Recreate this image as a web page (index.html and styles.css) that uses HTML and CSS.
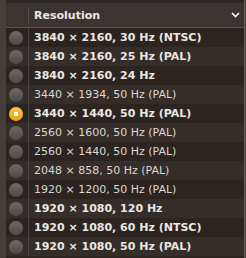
FILE: index.html
```html
<!DOCTYPE html>
<html lang="en">
	<head>
		<meta charset="UTF-8">
		<title>Resolution</title>
		<link rel="stylesheet" href="styles.css">
	</head>
	<body>
		<div class="panel">
			<div class="table">
				<div class="head">
					<div class="cell check"></div>
					<div class="cell title">Resolution
						<svg class="chevron" width="9" height="6" viewBox="0 0 9 6"><path d="M1 1 L4.5 4.5 L8 1" fill="none" stroke="#ffffff" stroke-width="1.6"/></svg>
					</div>
				</div>
				<ul class="rows">
					<li class="bold"><span class="radio"></span><span class="label">3840 × 2160, 30 Hz (NTSC)</span></li>
					<li class="bold"><span class="radio"></span><span class="label">3840 × 2160, 25 Hz (PAL)</span></li>
					<li class="bold"><span class="radio"></span><span class="label">3840 × 2160, 24 Hz</span></li>
					<li><span class="radio"></span><span class="label">3440 × 1934, 50 Hz (PAL)</span></li>
					<li class="bold"><span class="radio on"></span><span class="label">3440 × 1440, 50 Hz (PAL)</span></li>
					<li><span class="radio"></span><span class="label">2560 × 1600, 50 Hz (PAL)</span></li>
					<li><span class="radio"></span><span class="label">2560 × 1440, 50 Hz (PAL)</span></li>
					<li><span class="radio"></span><span class="label">2048 × 858, 50 Hz (PAL)</span></li>
					<li><span class="radio"></span><span class="label">1920 × 1200, 50 Hz (PAL)</span></li>
					<li class="bold"><span class="radio"></span><span class="label">1920 × 1080, 120 Hz</span></li>
					<li class="bold"><span class="radio"></span><span class="label">1920 × 1080, 60 Hz (NTSC)</span></li>
					<li class="bold"><span class="radio"></span><span class="label">1920 × 1080, 50 Hz (PAL)</span></li>
				</ul>
			</div>
		</div>
	</body>
</html>
```
FILE: styles.css
```css
html, body {
	margin: 0;
	height: 100%;
	background-color: #473e3a;
	overflow: hidden;
}
body {
	font-family: "DejaVu Sans", sans-serif;
	font-size: 11px;
}
.panel {
	padding-left: 6px;
	height: 100%;
}
.table {
	height: 100%;
	border-right: 1px solid #6a625e;
	margin-right: 1px;
	background-color: #2b2421;
}
.head {
	display: flex;
	height: 24px;
	border-top: 3px solid #2e2826;
	border-bottom: 1px solid #5a524e;
	background-color: #3b3431;
}
.head .check {
	width: 22px;
	border-right: 1px solid #554d49;
	margin: 4px 0;
}
.head .title {
	flex: 1;
	display: flex;
	align-items: center;
	padding-left: 5px;
	color: #ece8e4;
	font-weight: 600;
}
.chevron {
	margin-left: auto;
	margin-right: 4px;
}
.rows {
	list-style-type: none;
	margin: 0;
	padding: 0;
}
.rows li {
	display: flex;
	align-items: center;
	height: 19px;
	background-color: #2b2421;
	color: #dcd7d3;
}
.rows li:nth-child(even) {
	background-color: #342d2a;
}
.rows li.bold {
	font-weight: bold;
	color: #ebe7e3;
}
.radio {
	width: 22px;
	height: 100%;
	border-right: 1px solid #4c4440;
	display: flex;
	align-items: center;
	flex-shrink: 0;
}
.radio::before {
	content: "";
	margin-left: 3px;
	width: 14px;
	height: 14px;
	border-radius: 50%;
	background: linear-gradient(#6e6966, #4e4a47);
}
.radio.on::before {
	background: radial-gradient(circle, #ffffff 0 2px, transparent 2.5px), linear-gradient(#f7c444, #e9a415);
}
.label {
	padding-left: 5px;
	white-space: nowrap;
}
```
